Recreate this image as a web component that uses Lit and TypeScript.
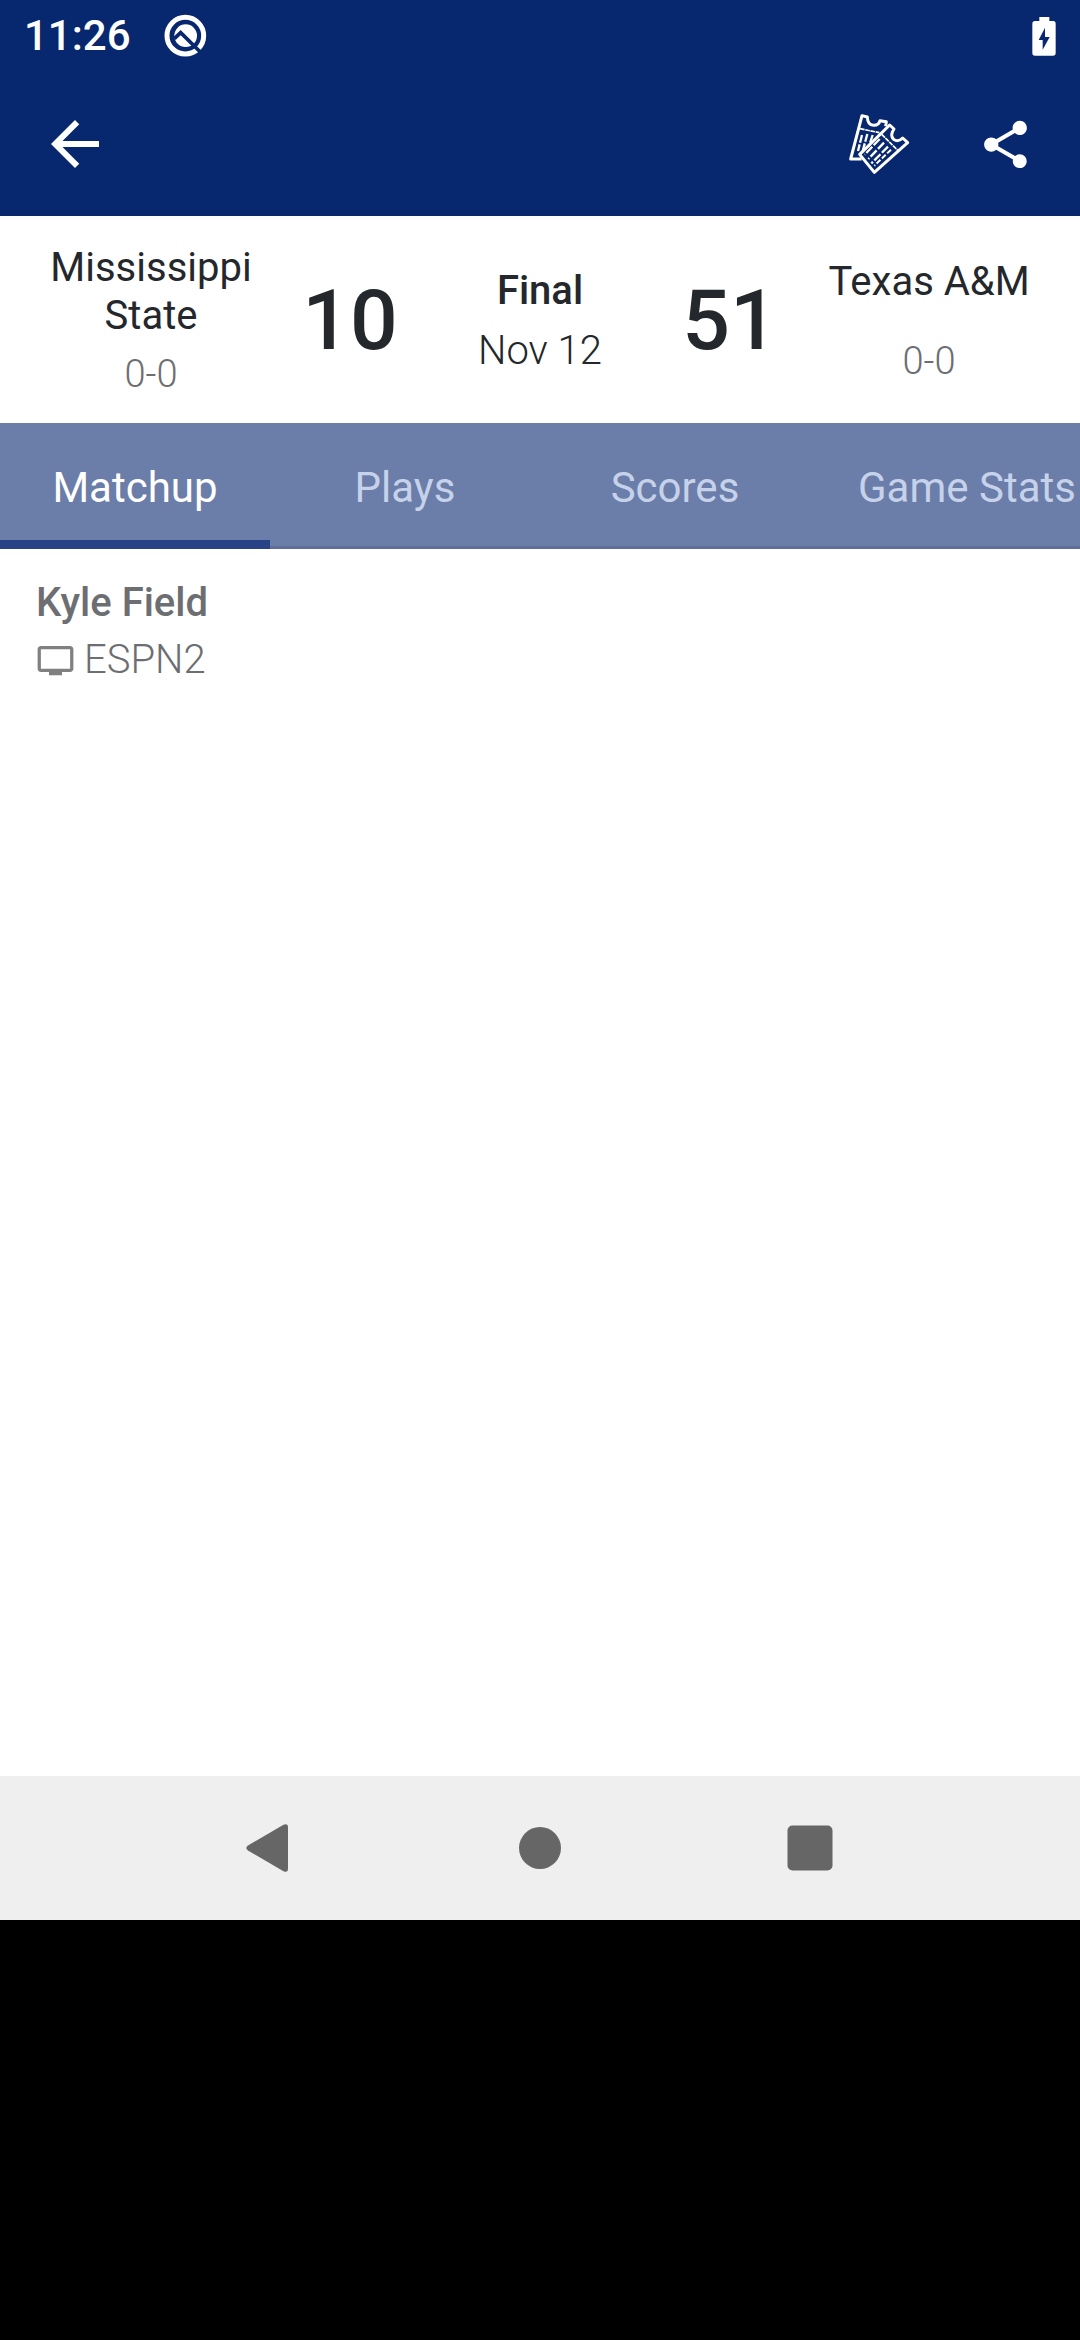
import { LitElement, html, css, svg } from "lit";
import { customElement, state } from "lit/decorators.js";

interface Team {
  name: string;
  record: string;
  score: number;
}

const AWAY: Team = { name: "Mississippi State", record: "0-0", score: 10 };
const HOME: Team = { name: "Texas A&M", record: "0-0", score: 51 };
const TABS = ["Matchup", "Plays", "Scores", "Game Stats"];

@customElement("status-bar")
class StatusBar extends LitElement {
  static styles = css`
    :host {
      display: flex;
      align-items: center;
      justify-content: space-between;
      height: 72px;
      padding: 0 24px;
      color: #fff;
    }
    .left {
      display: flex;
      align-items: center;
      gap: 32px;
      font-size: 42px;
      line-height: 48px;
      font-weight: 500;
    }
    svg {
      display: block;
    }
  `;
  render() {
    return html`
      <div class="left">
        <span>11:26</span>
        <svg width="44" height="44" viewBox="0 0 132 132" aria-hidden="true">
          <circle cx="67" cy="65" r="55" fill="none" stroke="#fff" stroke-width="15" />
          <circle cx="68" cy="65" r="34" fill="#fff" />
          <path d="M34 74 L53 56 L112 114" fill="none" stroke="#07276e" stroke-width="11" />
        </svg>
      </div>
      <svg width="24" height="39" viewBox="0 0 72 117" role="img" aria-label="Battery charging">
        <path
          fill="#fff"
          fill-rule="evenodd"
          d="M22 0H52V12H64Q71 12 71 20V108Q71 116 63 116H9Q1 116 1 108V20Q1 12 9 12H22Z M39 32L20 69H32V98L53 60H39Z"
        />
      </svg>
    `;
  }
}

@customElement("app-bar")
class AppBar extends LitElement {
  static styles = css`
    :host {
      display: flex;
      align-items: center;
      height: 144px;
      padding: 0 46px 0 39px;
    }
    button {
      border: 0;
      padding: 0;
      background: none;
      color: #fff;
      display: block;
    }
    svg {
      display: block;
    }
    .actions {
      margin-left: auto;
      display: flex;
      align-items: center;
      gap: 67px;
    }
  `;
  render() {
    return html`
      <button aria-label="Back">
        <svg width="72" height="72" viewBox="0 0 24 24" fill="currentColor">
          <path d="M20 11H7.83l5.59-5.59L12 4l-8 8 8 8 1.41-1.41L7.83 13H20v-2z" />
        </svg>
      </button>
      <div class="actions">
        <button aria-label="Tickets">
          <svg width="62" height="62" viewBox="84 68 186 186" fill="none" stroke="currentColor" stroke-width="9" stroke-linejoin="round">
            <path d="M125 206L92 206L126 76L142 80Q143 104 160 105Q176 106 180 91L199 94L197 108" />
            <path d="M120 115L178 127" stroke-width="5" stroke-dasharray="14 2" />
            <path d="M126 134L114 182M142 131L127 186M158 134L146 170" stroke-width="7" stroke-dasharray="24 5" />
            <path d="M119 192L209 104L222 116Q209 135 221 147Q234 157 248 143L263 157L163 246Z" />
            <path d="M185 132L234 181" stroke-width="5" stroke-dasharray="14 2" />
            <path d="M179 146L134 193M192 157L145 206M204 169L154 219" stroke-width="7" stroke-dasharray="26 6" />
            <path d="M213 178L163 226" stroke-width="6" stroke-dasharray="16 6" />
          </svg>
        </button>
        <button aria-label="Share">
          <svg width="57" height="57" viewBox="0 0 24 24" fill="currentColor">
            <path
              d="M18 16.08c-.76 0-1.44.3-1.96.77L8.91 12.7c.05-.23.09-.46.09-.7s-.04-.47-.09-.7l7.05-4.11c.54.5 1.25.81 2.04.81 1.66 0 3-1.34 3-3s-1.34-3-3-3-3 1.34-3 3c0 .24.04.47.09.7L8.04 9.81C7.5 9.31 6.79 9 6 9c-1.66 0-3 1.34-3 3s1.34 3 3 3c.79 0 1.5-.31 2.04-.81l7.12 4.16c-.05.21-.08.43-.08.65 0 1.61 1.31 2.92 2.92 2.92s2.92-1.31 2.92-2.92-1.31-2.92-2.92-2.92z"
            />
          </svg>
        </button>
      </div>
    `;
  }
}

@customElement("score-board")
class ScoreBoard extends LitElement {
  static styles = css`
    :host {
      display: grid;
      grid-template-columns: 230fr 168fr 212fr 168fr 230fr;
      align-items: center;
      padding: 28px 36px 25px;
      color: #24272b;
      text-align: center;
      font-size: 40px;
      line-height: 48px;
    }
    .team {
      display: flex;
      flex-direction: column;
      gap: 10px;
    }
    .name {
      min-height: 69px;
    }
    .record {
      font-size: 38px;
      font-weight: 300;
      color: #6d6e72;
    }
    .score {
      font-size: 84px;
      line-height: 98px;
      font-weight: 500;
    }
    .game {
      display: flex;
      flex-direction: column;
      gap: 12px;
    }
    .phase {
      font-weight: 500;
    }
    .date {
      font-weight: 300;
    }
  `;
  private team(t: Team) {
    return html`
      <div class="team">
        <div class="name">${t.name}</div>
        <div class="record">${t.record}</div>
      </div>
    `;
  }
  render() {
    return html`
      ${this.team(AWAY)}
      <div class="score">${AWAY.score}</div>
      <div class="game">
        <div class="phase">Final</div>
        <div class="date">Nov 12</div>
      </div>
      <div class="score">${HOME.score}</div>
      ${this.team(HOME)}
    `;
  }
}

@customElement("tab-strip")
class TabStrip extends LitElement {
  @state() private selected = 0;
  static styles = css`
    :host {
      display: block;
      overflow: hidden;
      background: #6b7da9;
    }
    .tabs {
      display: flex;
      height: 126px;
      box-shadow: inset 0 -3px #616f98;
    }
    .tab {
      flex: none;
      min-width: 25%;
      border: 0;
      border-top: 12px solid transparent;
      border-bottom: 9px solid transparent;
      padding: 0 48px;
      background: none;
      color: #c6d2ea;
      font: inherit;
      font-size: 42px;
      line-height: 48px;
      white-space: nowrap;
    }
    .tab[aria-selected="true"] {
      color: #fff;
      border-bottom-color: #274285;
    }
  `;
  render() {
    return html`
      <div class="tabs" role="tablist">
        ${TABS.map(
          (label, i) => html`<button
            class="tab"
            role="tab"
            aria-selected=${i === this.selected ? "true" : "false"}
            @click=${() => (this.selected = i)}
          >${label}</button>`
        )}
      </div>
    `;
  }
}

@customElement("game-info")
class GameInfo extends LitElement {
  static styles = css`
    :host {
      display: flex;
      flex-direction: column;
      gap: 9px;
      padding: 30px 36px;
      color: #6d6e72;
      font-size: 40px;
      line-height: 48px;
    }
    .venue {
      font-weight: 500;
    }
    .network {
      display: flex;
      align-items: center;
      gap: 9px;
      font-weight: 300;
    }
    svg {
      display: block;
      fill: #808080;
    }
  `;
  render() {
    return html`
      <div class="venue">Kyle Field</div>
      <div class="network">
        <svg width="39" height="39" viewBox="0 0 24 24" role="img" aria-label="TV">
          <path
            d="M21 3H3c-1.1 0-2 .9-2 2v12c0 1.1.9 2 2 2h5v2h8v-2h5c1.1 0 2-.9 2-2V5c0-1.1-.9-2-2-2zm0 14H3V5h18v12z"
          />
        </svg>
        <span>ESPN2</span>
      </div>
    `;
  }
}

@customElement("nav-bar")
class NavBar extends LitElement {
  static styles = css`
    :host {
      display: grid;
      grid-template-columns: repeat(3, 1fr);
      align-items: center;
      justify-items: center;
      height: 144px;
      padding: 0 12.5%;
      background: #efefef;
    }
    button {
      border: 0;
      padding: 0;
      background: none;
      color: #666;
    }
    svg {
      display: block;
    }
  `;
  private key(label: string, shape: unknown) {
    return html`<button aria-label=${label}>
      <svg width="48" height="48" viewBox="0 0 48 48" fill="currentColor">${shape}</svg>
    </button>`;
  }
  render() {
    return html`
      ${this.key("Back", svg`<path d="M2 21.5L37.500 .8Q42 -1 42 3.500V44.500Q42 49 37.500 47.200L2 26.500Q-1.500 24 2 21.500Z" />`)}
      ${this.key("Home", svg`<circle cx="24" cy="24" r="21" />`)}
      ${this.key("Recent apps", svg`<rect x="1.500" y="1.500" width="45" height="45" rx="5" />`)}
    `;
  }
}

@customElement("app-root")
class AppRoot extends LitElement {
  static styles = css`
    :host {
      display: flex;
      flex-direction: column;
      min-height: 100vh;
      background: #000;
      font-family: Roboto, "Liberation Sans", sans-serif;
    }
    .screen {
      display: flex;
      flex-direction: column;
      flex: 1;
      margin-bottom: 420px;
      background: #fff;
    }
    .top {
      background: #07276e;
    }
    .content {
      flex: 1;
    }
  `;
  render() {
    return html`
      <div class="screen">
        <header class="top">
          <status-bar></status-bar>
          <app-bar></app-bar>
        </header>
        <score-board></score-board>
        <tab-strip></tab-strip>
        <main class="content"><game-info></game-info></main>
        <nav-bar></nav-bar>
      </div>
    `;
  }
}
